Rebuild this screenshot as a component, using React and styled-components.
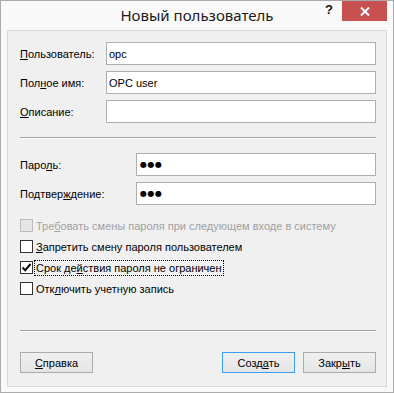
import React from 'react';
import styled, { createGlobalStyle } from 'styled-components';

const GlobalStyle = createGlobalStyle`
  html, body {
    margin: 0;
    padding: 0;
    background: #ffffff;
  }
  body {
    font-family: "Liberation Sans", Arial, sans-serif;
    font-size: 11px;
    color: #000;
  }
`;

const Window = styled.div`
  width: 394px;
  height: 393px;
  box-sizing: border-box;
  border: 1px solid #ababab;
  background: #f9f9f9;
  display: flex;
  flex-direction: column;
`;

const TitleBar = styled.div`
  height: 29px;
  display: grid;
  grid-template-columns: 1fr auto 1fr;
  align-items: start;
`;

const Title = styled.div`
  grid-column: 2;
  line-height: 29px;
  font-family: "Noto Sans", "Open Sans", sans-serif;
  font-size: 15px;
  color: #1a1a1a;
  white-space: nowrap;
`;

const Controls = styled.div`
  grid-column: 3;
  display: flex;
  justify-content: flex-end;
  margin-right: 6px;
`;

const HelpButton = styled.div`
  width: 26px;
  height: 20px;
  display: flex;
  align-items: center;
  justify-content: center;
  font-family: "Liberation Sans", Arial, sans-serif;
  font-weight: bold;
  font-size: 13px;
  color: #111;
  padding-bottom: 3px;
  box-sizing: border-box;
`;

const CloseButton = styled.div`
  width: 45px;
  height: 20px;
  background: #c75050;
  display: flex;
  align-items: center;
  justify-content: center;
`;

const Panel = styled.div`
  flex: 1;
  margin: 0 6px 5px;
  border: 1px solid #d9d9d9;
  background: #f0f0f0;
  padding: 11px 10px 0 12px;
  display: flex;
  flex-direction: column;
`;

const FieldGrid = styled.div`
  display: grid;
  grid-template-columns: ${({ labelWidth }) => labelWidth}px 1fr;
  row-gap: 6px;
  align-items: center;
  margin-top: ${({ top }) => top || 0}px;
`;

const Label = styled.div`
  white-space: nowrap;
`;

const TextBox = styled.div`
  height: 23px;
  box-sizing: border-box;
  border: 1px solid #abadb3;
  background: #fff;
  padding: 0 2px;
  display: flex;
  align-items: center;
  font-size: 11px;
  white-space: nowrap;
`;

const Dots = styled.span`
  font-family: "DejaVu Sans", sans-serif;
  font-size: 8px;
  letter-spacing: 0.5px;
  padding-left: 1px;
  color: #000;
`;

const Separator = styled.div`
  height: 0;
  border-top: 1px solid #a0a0a0;
  border-bottom: 1px solid #ffffff;
  margin-top: ${({ top }) => top}px;
`;

const CheckList = styled.div`
  display: flex;
  flex-direction: column;
  margin-top: 10px;
`;

const CheckRow = styled.div`
  height: 21px;
  display: flex;
  align-items: center;
  color: ${({ disabled }) => (disabled ? '#a0a0a0' : '#000')};
`;

const Box = styled.div`
  width: 13px;
  height: 13px;
  box-sizing: border-box;
  border: 1px solid ${({ disabled }) => (disabled ? '#bcbcbc' : '#333')};
  background: ${({ disabled }) => (disabled ? '#e6e6e6' : '#fff')};
  display: flex;
  align-items: center;
  justify-content: center;
  flex-shrink: 0;
`;

const CheckText = styled.span`
  margin-left: 1px;
  padding: 1px 1px 1px 1px;
  border: 1px dotted ${({ focused }) => (focused ? '#000' : 'transparent')};
  white-space: nowrap;
`;

const ButtonBar = styled.div`
  display: flex;
  gap: 8px;
  margin-top: 20px;
`;

const Spacer = styled.div`
  flex: 1;
`;

const Button = styled.div`
  width: 73px;
  height: 21px;
  box-sizing: border-box;
  border: 1px solid ${({ primary }) => (primary ? '#3c9cf0' : '#acacac')};
  background: linear-gradient(#f0f0f0, #e5e5e5);
  display: flex;
  align-items: center;
  justify-content: center;
  font-size: 11px;
`;

const Check = ({ label, checked, disabled, focused }) => (
  <CheckRow disabled={disabled}>
    <Box disabled={disabled}>
      {checked && (
        <svg width="11" height="11" viewBox="0 0 11 11">
          <path d="M1.5 5.5 L4.2 8.3 L9.5 2" fill="none" stroke="#000" strokeWidth="2" />
        </svg>
      )}
    </Box>
    <CheckText focused={focused}>{label}</CheckText>
  </CheckRow>
);

export default function App() {
  return (
    <>
      <GlobalStyle />
      <Window>
        <TitleBar>
          <Title>Новый пользователь</Title>
          <Controls>
            <HelpButton>?</HelpButton>
            <CloseButton>
              <svg width="10" height="9" viewBox="0 0 10 9">
                <path d="M1 0.5 L9 8.5 M9 0.5 L1 8.5" stroke="#fff" strokeWidth="2" />
              </svg>
            </CloseButton>
          </Controls>
        </TitleBar>
        <Panel>
          <FieldGrid labelWidth={86}>
            <Label><u>П</u>ользователь:</Label>
            <TextBox>opc</TextBox>
            <Label>Пол<u>н</u>ое имя:</Label>
            <TextBox>OPC user</TextBox>
            <Label><u>О</u>писание:</Label>
            <TextBox />
          </FieldGrid>
          <Separator top={14} />
          <FieldGrid labelWidth={116} top={14}>
            <Label>Паро<u>л</u>ь:</Label>
            <TextBox><Dots>●●●</Dots></TextBox>
            <Label>Подтвер<u>ж</u>дение:</Label>
            <TextBox><Dots>●●●</Dots></TextBox>
          </FieldGrid>
          <CheckList>
            <Check disabled label={<>Тре<u>б</u>овать смены пароля при следующем входе в систему</>} />
            <Check label={<><u>З</u>апретить смену пароля пользователем</>} />
            <Check checked focused label={<>Срок де<u>й</u>ствия пароля не ограничен</>} />
            <Check label={<>Отк<u>л</u>ючить учетную запись</>} />
          </CheckList>
          <Separator top={31} />
          <ButtonBar>
            <Button><span><u>С</u>правка</span></Button>
            <Spacer />
            <Button primary><span>Созд<u>а</u>ть</span></Button>
            <Button><span>Закр<u>ы</u>ть</span></Button>
          </ButtonBar>
        </Panel>
      </Window>
    </>
  );
}
